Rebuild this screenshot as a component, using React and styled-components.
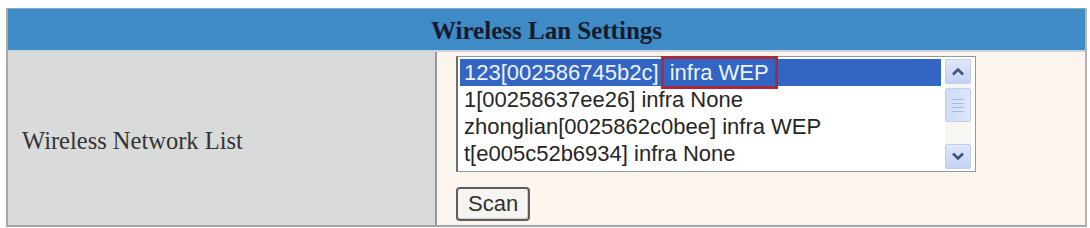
import React from "react";
import styled, { createGlobalStyle } from "styled-components";

const Global = createGlobalStyle`
  html, body { margin: 0; padding: 0; background: #ffffff; }
  body { width: 1090px; height: 228px; overflow: hidden; }
`;

const Panel = styled.div`
  margin: 8px 0 0 6px;
  width: 1081px;
  border-left: 2px solid #a9a9a9;
  border-right: 2px solid #b5b5b5;
  border-bottom: 2px solid #a5a5a5;
  box-sizing: border-box;
`;

const Header = styled.div`
  height: 42px;
  background: #3f8bc6;
  border-top: 1px solid #7fa6c8;
  display: flex;
  align-items: center;
  justify-content: center;
  font-family: "Liberation Serif", "Times New Roman", serif;
  font-weight: bold;
  font-size: 25px;
  color: #151a2c;
  box-sizing: border-box;
  padding-top: 3px;
`;

const Body = styled.div`
  display: grid;
  grid-template-columns: 429px 1fr;
  height: 173px;
  border-top: 2px solid #c9d4dc;
`;

const LabelCell = styled.div`
  background: #d9dada;
  border-right: 2px solid #9a9a9a;
  display: flex;
  align-items: center;
  padding: 5px 0 0 14px;
  font-family: "Liberation Serif", "Times New Roman", serif;
  font-size: 24.5px;
  color: #333333;
`;

const ValueCell = styled.div`
  background: #fcf5ee;
  padding: 4px 0 0 19px;
  display: flex;
  flex-direction: column;
  align-items: flex-start;
`;

const ListBox = styled.div`
  width: 520px;
  height: 116px;
  background: #ffffff;
  border: 1px solid #8e9aa6;
  border-left: 2px solid #6e6e6e;
  box-sizing: border-box;
  display: flex;
  padding: 2px 4px 2px 2px;
`;

const Options = styled.div`
  flex: 1;
  display: flex;
  flex-direction: column;
`;

const Option = styled.div`
  height: 27px;
  line-height: 27px;
  padding-left: 4px;
  font-family: "Liberation Sans", Arial, sans-serif;
  font-size: 22px;
  white-space: nowrap;
  color: ${(p) => (p.$selected ? "#eef3ff" : "#262626")};
  background: ${(p) => (p.$selected ? "#3366c2" : "transparent")};
  margin-right: ${(p) => (p.$selected ? "4px" : "0")};
`;

const Marked = styled.span`
  outline: 3px solid #a92a3c;
  outline-offset: 1px;
  padding: 0 5px;
`;

const ScrollBar = styled.div`
  width: 26px;
  display: flex;
  flex-direction: column;
  gap: 4px;
  background: #f7f6f2;
`;

const ScrollButton = styled.div`
  height: 25px;
  border: 1px solid #c2cfe8;
  border-radius: 2px;
  background: linear-gradient(#dfe8fb, #c3d2f4);
  display: flex;
  align-items: center;
  justify-content: center;
  box-sizing: border-box;
`;

const Thumb = styled.div`
  height: 34px;
  border: 1px solid #c2cfe8;
  border-radius: 2px;
  background: linear-gradient(90deg, #cfdcf8, #dde6fb);
  display: flex;
  flex-direction: column;
  align-items: center;
  justify-content: center;
  gap: 3px;
  box-sizing: border-box;
`;

const Grip = styled.div`
  width: 12px;
  height: 1px;
  background: #a9bbe6;
`;

const Track = styled.div`
  flex: 1;
`;

const ScanButton = styled.button`
  margin-top: 15px;
  height: 34px;
  padding: 0 10px;
  font-family: "Liberation Sans", Arial, sans-serif;
  font-size: 22px;
  color: #303030;
  background: #f6f4f0;
  border: 2px solid #5c5c5c;
  border-radius: 4px;
  box-shadow: inset -1px -1px 0 #d0ccc4;
  cursor: pointer;
`;

const Arrow = ({ up }) => (
  <svg width="14" height="9" viewBox="0 0 14 9">
    <path
      d={up ? "M2 7.5 L7 2.5 L12 7.5" : "M2 1.5 L7 6.5 L12 1.5"}
      fill="none"
      stroke="#3f527a"
      strokeWidth="2.6"
    />
  </svg>
);

const networks = [
  { ssid: "123[002586745b2c]", rest: "infra WEP", selected: true },
  { ssid: "1[00258637ee26]", rest: "infra None" },
  { ssid: "zhonglian[0025862c0bee]", rest: "infra WEP" },
  { ssid: "t[e005c52b6934]", rest: "infra None" },
];

export default function App() {
  return (
    <>
      <Global />
      <Panel>
        <Header>Wireless Lan Settings</Header>
        <Body>
          <LabelCell>Wireless Network List</LabelCell>
          <ValueCell>
            <ListBox>
              <Options>
                {networks.map((n) => (
                  <Option key={n.ssid} $selected={n.selected}>
                    {n.ssid}{" "}
                    {n.selected ? <Marked>{n.rest}</Marked> : n.rest}
                  </Option>
                ))}
              </Options>
              <ScrollBar>
                <ScrollButton>
                  <Arrow up />
                </ScrollButton>
                <Thumb>
                  <Grip />
                  <Grip />
                  <Grip />
                  <Grip />
                </Thumb>
                <Track />
                <ScrollButton>
                  <Arrow />
                </ScrollButton>
              </ScrollBar>
            </ListBox>
            <ScanButton>Scan</ScanButton>
          </ValueCell>
        </Body>
      </Panel>
    </>
  );
}
